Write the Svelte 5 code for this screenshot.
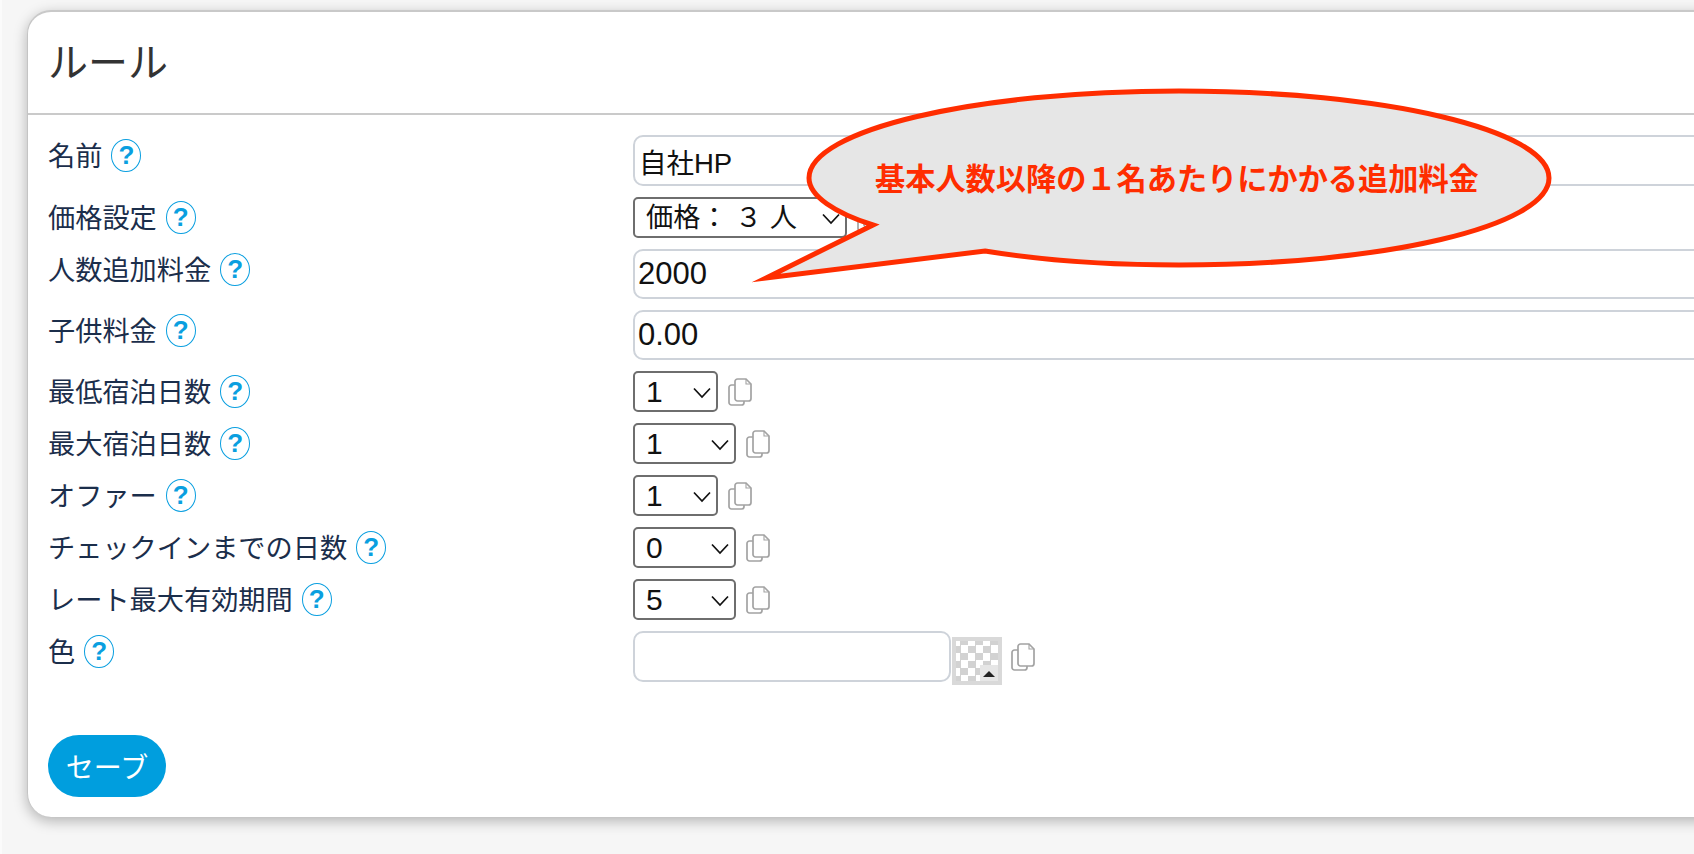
<script>
  const selects = [
    { label: '最低宿泊日数', value: '1', width: 85 },
    { label: '最大宿泊日数', value: '1', width: 103 },
    { label: 'オファー', value: '1', width: 85 },
    { label: 'チェックインまでの日数', value: '0', width: 103 },
    { label: 'レート最大有効期間', value: '5', width: 103 },
  ];
</script>

{#snippet label(text)}
  <div class="label"><span class="label-text">{text}</span><span class="help">?</span></div>
{/snippet}

{#snippet copy()}
  <svg class="copy" viewBox="0 0 24 28" fill="none" stroke="#a3a3a3" stroke-width="1.7">
    <path d="M7 7H3.5A2.5 2.5 0 0 0 1 9.5v15A2.5 2.5 0 0 0 3.5 27h10a2.5 2.5 0 0 0 2.5-2.5V23" />
    <path d="M9.5 1H18l5 5v14.5a2.5 2.5 0 0 1-2.500 2.500h-11A2.500 2.500 0 0 1 7 20.500v-17A2.500 2.500 0 0 1 9.500 1Z" />
    <path d="M18 1v5h5" stroke-width="1.1" />
  </svg>
{/snippet}

{#snippet dropdown(value, width, digit)}
  <div class="select" class:digit style="width: {width}px">
    <select><option>{value}</option></select>
    <svg class="chevron" viewBox="0 0 18 12" fill="none" stroke="#111" stroke-width="1.700">
      <path d="M1 1.500 9 10l8-8.500" />
    </svg>
  </div>
{/snippet}

<div class="page">
  <section class="card">
    <header class="head"><h2>ルール</h2></header>
    <div class="rows">
      <div class="row">
        {@render label('名前')}
        <input class="text name" value="自社HP" />
      </div>
      <div class="row">
        {@render label('価格設定')}
        <div class="field">
          {@render dropdown('価格： ３ 人', 214, false)}
          {@render copy()}
        </div>
      </div>
      <div class="row">
        {@render label('人数追加料金')}
        <input class="text" value="2000" />
      </div>
      <div class="row">
        {@render label('子供料金')}
        <input class="text" value="0.00" />
      </div>
      {#each selects as s}
        <div class="row">
          {@render label(s.label)}
          <div class="field">
            {@render dropdown(s.value, s.width, true)}
            {@render copy()}
          </div>
        </div>
      {/each}
      <div class="row">
        {@render label('色')}
        <div class="field color">
          <input class="text swatch-input" value="" />
          <div class="swatch"><div class="checker"><span class="arrow"></span></div></div>
          {@render copy()}
        </div>
      </div>
    </div>
    <button class="save">セーブ</button>
  </section>

  <div class="callout">
    <svg viewBox="750 80 810 210" width="810" height="210">
      <path
        d="M873 225C835 213 809 196 809 178C809 130 974 91 1179 91C1384 91 1549 130 1549 178C1549 226 1384 265 1179 265C1110 265 1040 260 985 251L766 278Z"
        fill="#e6e6e6"
        stroke="#ff2d00"
        stroke-width="5"
        stroke-miterlimit="20"
      />
    </svg>
    <span class="callout-text">基本人数以降の１名あたりにかかる追加料金</span>
  </div>
</div>

<style>
  :global(body) {
    background: #f6f6f6;
    font-family: "Liberation Sans", "Noto Sans CJK JP", sans-serif;
  }

  .page {
    position: relative;
    height: 854px;
    overflow: hidden;
    padding: 10px 0 0 25px;
    border-left: 2px solid #fbfbfb;
    box-sizing: border-box;
  }

  .card {
    width: 1800px;
    height: 807px;
    box-sizing: border-box;
    background: #fff;
    border-top: 2px solid #c9c9c9;
    border-left: 1.500px solid #c4c4c4;
    border-radius: 24px;
    box-shadow: 0 4px 14px rgba(0, 0, 0, 0.28);
  }

  .head {
    height: 101px;
    padding-left: 20px;
    border-bottom: 2px solid #cacaca;
    box-sizing: content-box;
  }

  h2 {
    margin: 0;
    padding-top: 23px;
    font-size: 40px;
    line-height: 56px;
    font-weight: 400;
    color: #333;
  }

  .rows {
    display: flex;
    flex-direction: column;
    gap: 11px;
    padding: 20px 0 0 20px;
  }

  .row {
    display: flex;
    align-items: flex-start;
  }

  .label {
    width: 585px;
    flex: none;
    display: flex;
    align-items: center;
    gap: 9px;
    height: 33px;
    padding-top: 4px;
    font-size: 27.200px;
    color: #1b2e4b;
    white-space: nowrap;
  }

  .label-text {
    margin-top: -4px;
  }

  .help {
    width: 28px;
    height: 31px;
    border: 1.500px solid #0a9fe0;
    border-radius: 50%;
    display: flex;
    align-items: center;
    justify-content: center;
    color: #0a9fe0;
    font-size: 26px;
    font-weight: 700;
    font-family: "Liberation Sans", sans-serif;
    flex: none;
  }

  .text {
    flex: 1;
    height: 50px;
    box-sizing: border-box;
    border: 2px solid #ced3da;
    border-radius: 10px;
    background: #fff;
    padding: 0 3px;
    font: 31px "Liberation Sans", "Noto Sans CJK JP", sans-serif;
    color: #111;
    outline: none;
  }

  .name {
    height: 51px;
    font-size: 27.500px;
    padding: 0 4px;
  }

  .field {
    display: flex;
    align-items: center;
    gap: 10px;
  }

  .select {
    position: relative;
    height: 41px;
  }

  select {
    appearance: none;
    width: 100%;
    height: 100%;
    box-sizing: border-box;
    border: 2px solid #6e6e6e;
    border-radius: 5px;
    background: #fff;
    padding: 0 0 0 11px;
    font: 27.200px "Liberation Sans", "Noto Sans CJK JP", sans-serif;
    color: #111;
    outline: none;
  }

  .digit select {
    font-size: 30px;
  }

  .chevron {
    position: absolute;
    right: 7px;
    top: 16px;
    width: 18px;
    height: 12px;
  }

  .copy {
    width: 24px;
    height: 28px;
    flex: none;
  }

  .color {
    flex: none;
    gap: 0;
    align-items: flex-start;
  }

  .color .copy {
    margin-top: 12px;
  }

  .swatch-input {
    flex: none;
    width: 318px;
    height: 51px;
  }

  .swatch {
    width: 50px;
    height: 48px;
    margin: 6px 9px 0 1px;
    padding: 4px;
    box-sizing: border-box;
    background: #d9d9d9;
  }

  .checker {
    position: relative;
    height: 100%;
    background: repeating-conic-gradient(#d2d2d2 0 25%, #fff 0 50%) -3px -3px / 15px 15px;
  }

  .arrow {
    position: absolute;
    right: 0;
    bottom: 0;
    width: 18px;
    height: 16px;
    background: #e6e6e6;
  }

  .arrow::after {
    content: "";
    position: absolute;
    left: 3px;
    top: 6px;
    border-left: 6px solid transparent;
    border-right: 6px solid transparent;
    border-bottom: 6px solid #222;
  }

  .save {
    display: block;
    width: 118px;
    height: 62px;
    margin: 50px 0 0 20px;
    border: none;
    border-radius: 31px;
    background: #009ede;
    color: #fff;
    font: 28px "Liberation Sans", "Noto Sans CJK JP", sans-serif;
    padding: 0;
  }

  .callout {
    position: absolute;
    left: 748px;
    top: 80px;
    width: 810px;
    height: 210px;
  }

  .callout svg {
    display: block;
  }

  .callout-text {
    position: absolute;
    left: 125px;
    top: 78px;
    font-size: 30.200px;
    line-height: 44px;
    font-weight: 700;
    color: #ff2d00;
    white-space: nowrap;
  }
</style>
